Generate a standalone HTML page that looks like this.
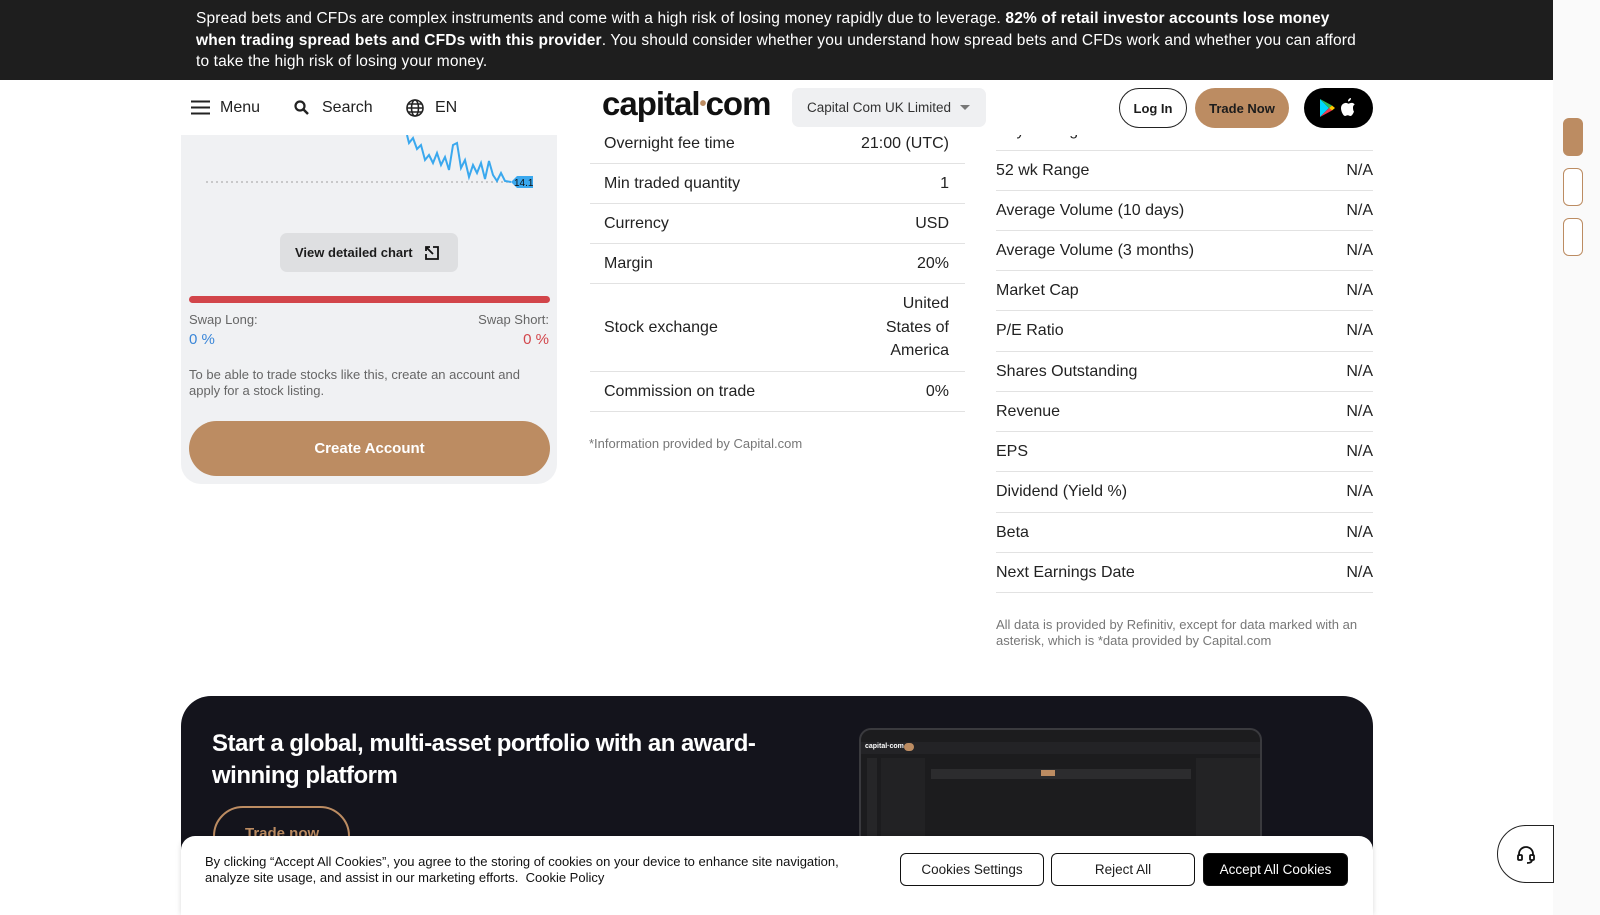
<!DOCTYPE html>
<html style="overflow:hidden"><head><meta charset="utf-8">
<style>
*{box-sizing:border-box;margin:0;padding:0}
html,body{width:1600px;height:915px;overflow:hidden}
body{background:#fff;font-family:"Liberation Sans",sans-serif;color:#1c1c1c;position:relative}
.abs{position:absolute}
.warn{left:0;top:0;width:1553px;height:80px;background:#1e1e1e;color:#fff;font-size:15.5px;line-height:21.5px;padding:8px 190px 0 196px;letter-spacing:0.15px}
.side{left:1553px;top:0;width:47px;height:915px;background:#fafafa}
.header{left:0;top:80px;width:1553px;height:55px;background:#fff;z-index:5}
.nav{font-size:16px;color:#222;top:19px}
.card{left:181px;top:100px;width:376px;height:384px;background:#f0f1f3;border-radius:0 0 20px 20px}
.row{position:absolute;display:flex;justify-content:space-between;align-items:center;font-size:16px;color:#222;border-bottom:1px solid #e2e2e2}
.mid .row{left:590px;width:375px;padding:0 16px 0 14px}
.rt .row{left:996px;width:377px}
.banner{left:181px;top:696px;width:1192px;height:219px;background:#14141c;border-radius:30px 30px 0 0;overflow:hidden}
.cookie{left:181px;top:836px;width:1192px;height:79px;background:#fff;border-radius:14px 14px 0 0;box-shadow:0 0 6px rgba(0,0,0,.15);z-index:6}
.cbtn{position:absolute;top:17px;height:33px;border:1px solid #111;border-radius:6px;font-size:13.5px;display:flex;align-items:center;justify-content:center;background:#fff}
</style></head><body>
<div class="abs warn">Spread bets and CFDs are complex instruments and come with a high risk of losing money rapidly due to leverage. <b>82% of retail investor accounts lose money when trading spread bets and CFDs with this provider</b>. You should consider whether you understand how spread bets and CFDs work and whether you can afford to take the high risk of losing your money.</div>
<div class="abs side">
<div class="abs" style="left:10px;top:118px;width:20px;height:38px;background:#bc8c62;border-radius:6px"></div>
<div class="abs" style="left:10px;top:168px;width:20px;height:38px;border:1px solid #bc8c62;border-radius:6px;background:#fff"></div>
<div class="abs" style="left:10px;top:218px;width:20px;height:38px;border:1px solid #bc8c62;border-radius:6px;background:#fff"></div>
</div>

<div class="abs card">
<svg class="abs" style="left:0;top:35px" width="376" height="60">
<line x1="25" y1="47" x2="330" y2="47" stroke="#bbb" stroke-width="1.5" stroke-dasharray="2,3"/>
<polyline fill="none" stroke="#3aa8ee" stroke-width="2" points="226,0 228,8 232,3 236,14 240,10 244,25 248,20 252,28 256,18 260,30 264,22 268,35 272,10 276,8 280,33 284,25 288,42 292,30 296,38 300,28 304,44 308,26 312,40 316,46 320,38 324,46 330,47"/>
<path d="M330 47 L336 41 H352 V53 H336 Z" fill="#3aa8ee"/>
<text x="333" y="51" font-size="10" fill="#111" font-family="Liberation Sans">14.1</text>
</svg>
<div class="abs" style="left:99px;top:133px;width:178px;height:39px;background:#dedfe1;border-radius:7px;font-size:13px;font-weight:bold;display:flex;align-items:center;padding-left:15px">View detailed chart
<svg style="margin-left:11px" width="16" height="16" viewBox="0 0 16 16" fill="none" stroke="#111" stroke-width="1.8"><path d="M2 6V2h4M2 2l7 7M9 2h5v12H2v-5"/></svg></div>
<div class="abs" style="left:8px;top:196px;width:361px;height:7px;background:#d2454a;border-radius:4px"></div>
<div class="abs" style="left:8px;top:212px;font-size:13px;color:#666">Swap Long:</div>
<div class="abs" style="right:8px;top:212px;font-size:13px;color:#666">Swap Short:</div>
<div class="abs" style="left:8px;top:231px;font-size:15px;color:#3a86d8">0 %</div>
<div class="abs" style="right:8px;top:231px;font-size:15px;color:#d2454a">0 %</div>
<div class="abs" style="left:8px;top:267px;width:355px;font-size:13px;color:#666;line-height:16px">To be able to trade stocks like this, create an account and apply for a stock listing.</div>
<div class="abs" style="left:8px;top:321px;width:361px;height:55px;background:#bc8c62;border-radius:28px;color:#fff;font-weight:bold;font-size:15px;display:flex;align-items:center;justify-content:center">Create Account</div>
</div>

<div class="mid">
<div class="row" style="top:124px;height:40px">Overnight fee time<span>21:00 (UTC)</span></div>
<div class="row" style="top:164px;height:40px">Min traded quantity<span>1</span></div>
<div class="row" style="top:204px;height:40px">Currency<span>USD</span></div>
<div class="row" style="top:244px;height:40px">Margin<span>20%</span></div>
<div class="row" style="top:284px;height:88px">Stock exchange<span style="text-align:right;line-height:23.5px">United<br>States of<br>America</span></div>
<div class="row" style="top:372px;height:40px">Commission on trade<span>0%</span></div>
<div class="abs" style="left:589px;top:436px;font-size:13px;color:#777">*Information provided by Capital.com</div>
</div>

<div class="rt">
<div class="row" style="top:111px;height:40px">Day's Range<span>N/A</span></div>
<div class="row" style="top:151px;height:40px">52 wk Range<span>N/A</span></div>
<div class="row" style="top:191px;height:40px">Average Volume (10 days)<span>N/A</span></div>
<div class="row" style="top:231px;height:40px">Average Volume (3 months)<span>N/A</span></div>
<div class="row" style="top:271px;height:40px">Market Cap<span>N/A</span></div>
<div class="row" style="top:311px;height:41px">P/E Ratio<span>N/A</span></div>
<div class="row" style="top:352px;height:40px">Shares Outstanding<span>N/A</span></div>
<div class="row" style="top:392px;height:40px">Revenue<span>N/A</span></div>
<div class="row" style="top:432px;height:40px">EPS<span>N/A</span></div>
<div class="row" style="top:472px;height:41px">Dividend (Yield %)<span>N/A</span></div>
<div class="row" style="top:513px;height:40px">Beta<span>N/A</span></div>
<div class="row" style="top:553px;height:40px">Next Earnings Date<span>N/A</span></div>
<div class="abs" style="left:996px;top:617px;width:377px;font-size:13px;color:#777;line-height:16px">All data is provided by Refinitiv, except for data marked with an asterisk, which is *data provided by Capital.com</div>
</div>

<div class="abs header">
<svg class="abs" style="left:191px;top:20px" width="19" height="15"><path d="M0 1.5H19M0 7.5H19M0 13.5H19" stroke="#222" stroke-width="2"/></svg>
<div class="abs nav" style="left:220px">Menu</div>
<svg class="abs" style="left:294px;top:20px" width="15" height="15"><circle cx="6" cy="6" r="4.5" stroke="#222" stroke-width="2.2" fill="none"/><path d="M9.5 9.5L14 14" stroke="#222" stroke-width="2.5"/></svg>
<div class="abs nav" style="left:322px">Search</div>
<svg class="abs" style="left:406px;top:19px" width="18" height="18" fill="none" stroke="#222" stroke-width="1.6"><circle cx="9" cy="9" r="8"/><ellipse cx="9" cy="9" rx="3.5" ry="8"/><path d="M1 9H17M2.5 5H15.5M2.5 13H15.5"/></svg>
<div class="abs nav" style="left:435px">EN</div>
<div class="abs" style="left:602px;top:5px;font-size:33px;font-weight:bold;letter-spacing:-1px;color:#111">capital<span style="color:#bc8c62;font-size:20px;vertical-align:5px">•</span>com</div>
<div class="abs" style="left:792px;top:8px;width:194px;height:39px;background:#eff0f2;border-radius:7px;font-size:13.5px;color:#333;padding:12px 0 0 15px">Capital Com UK Limited<svg class="abs" style="left:168px;top:17px" width="10" height="6"><path d="M0 0H10L5 5Z" fill="#777"/></svg></div>
<div class="abs" style="left:1119px;top:8px;width:68px;height:40px;border:1.5px solid #222;border-radius:20px;font-size:13px;font-weight:bold;display:flex;align-items:center;justify-content:center">Log In</div>
<div class="abs" style="left:1195px;top:8px;width:94px;height:40px;background:#bc8c62;border-radius:20px;font-size:13px;font-weight:bold;display:flex;align-items:center;justify-content:center">Trade Now</div>
<div class="abs" style="left:1304px;top:8px;width:69px;height:40px;background:#000;border-radius:20px">
<svg class="abs" style="left:15px;top:11px" width="16" height="18"><path d="M1 0L10 9L1 18Z" fill="#00d7fe"/><path d="M1 0L13 6.5L10 9Z" fill="#32bb5a"/><path d="M1 18L13 11.5L10 9Z" fill="#f0394f"/><path d="M13 6.5L16 9L13 11.5L10 9Z" fill="#ffc800"/></svg>
<svg class="abs" style="left:37px;top:10px" width="15" height="18"><path d="M10 0c0 2-1.5 3.5-3 3.5 0-2 1.5-3.5 3-3.5zM12 9.5c0-2 1.6-3 1.7-3-1-1.4-2.4-1.6-3-1.6-1.3-.1-2.5.8-3.100.8-.7 0-1.700-.8-2.800-.8C3 5 0 6.300 0 10.300c0 3.200 2.300 7.700 4 7.700 1 0 1.400-.7 2.700-.7s1.600.7 2.700.7c1.700 0 3.300-3.500 3.600-4.500-.1 0-1-1-1-4z" fill="#fff"/></svg>
</div>
</div>

<div class="abs banner">
<div class="abs" style="left:31px;top:32px;width:590px;font-size:24px;font-weight:bold;color:#fff;line-height:32px;letter-spacing:-0.5px">Start a global, multi-asset portfolio with an award-winning platform</div>
<div class="abs" style="left:32px;top:110px;width:137px;height:60px;border:2px solid #bc8c62;border-radius:30px;color:#bc8c62;font-weight:bold;font-size:15px;padding:17px 0 0 30px">Trade now</div>
<div class="abs" style="left:678px;top:32px;width:403px;height:140px;background:#1c1c1e;border:2px solid #3a3a3e;border-radius:12px 12px 0 0;overflow:hidden">
<div class="abs" style="left:0;top:12px;width:403px;height:12px;background:#232326"></div>
<div class="abs" style="left:4px;top:13px;font-size:7px;color:#fff;font-weight:bold">capital·com</div>
<div class="abs" style="left:43px;top:13px;width:10px;height:8px;background:#bc8c62;border-radius:4px"></div>
<div class="abs" style="left:6px;top:28px;width:10px;height:110px;background:#262628"></div>
<div class="abs" style="left:20px;top:28px;width:44px;height:110px;background:#222224"></div>
<div class="abs" style="left:70px;top:39px;width:260px;height:10px;background:#2c2c2e"></div>
<div class="abs" style="left:180px;top:40px;width:14px;height:6px;background:#bc8c62"></div>
<div class="abs" style="left:335px;top:28px;width:64px;height:110px;background:#232325"></div>
</div>
</div>

<div class="abs cookie">
<div class="abs" style="left:24px;top:18px;width:660px;font-size:13px;line-height:16px;color:#111">By clicking “Accept All Cookies”, you agree to the storing of cookies on your device to enhance site navigation, analyze site usage, and assist in our marketing efforts.&nbsp; Cookie Policy</div>
<div class="cbtn" style="left:719px;width:144px">Cookies Settings</div>
<div class="cbtn" style="left:870px;width:144px">Reject All</div>
<div class="cbtn" style="left:1022px;width:145px;background:#000;color:#fff">Accept All Cookies</div>
</div>

<div class="abs" style="left:1497px;top:825px;width:57px;height:58px;border:1px solid #222;border-radius:29px 0 0 29px;background:#fff;z-index:7">
<svg class="abs" style="left:18px;top:19px" width="20" height="20" fill="none" stroke="#111" stroke-width="1.8"><path d="M3 11V9a7 7 0 0114 0v2"/><rect x="2" y="10" width="4" height="5" rx="1"/><rect x="14" y="10" width="4" height="5" rx="1"/><path d="M16 15c0 2-2 3-5 3"/></svg>
</div>
</body></html>
